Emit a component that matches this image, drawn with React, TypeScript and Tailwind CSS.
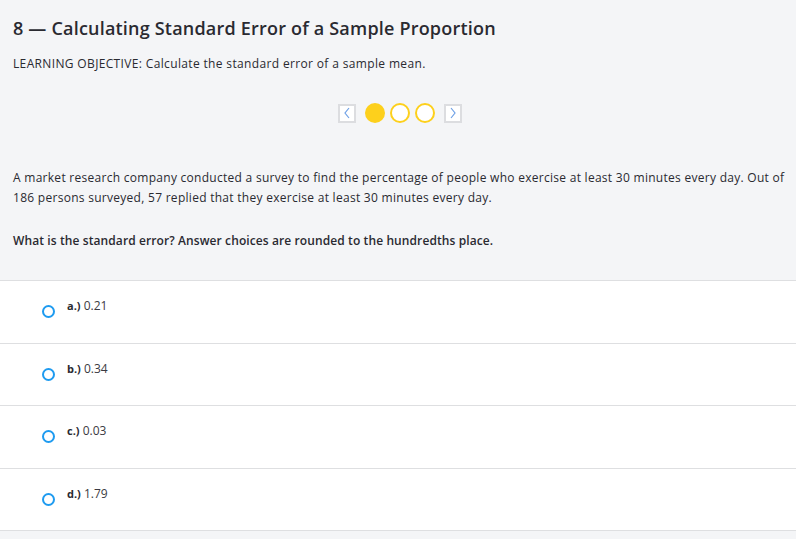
import React from 'react';

const options = [
  { letter: 'a.)', value: '0.21' },
  { letter: 'b.)', value: '0.34' },
  { letter: 'c.)', value: '0.03' },
  { letter: 'd.)', value: '1.79' },
];

function Pager() {
  return (
    <div className="flex items-center justify-center gap-[5px] pt-[31px] pr-[4px]">
      <div className="w-[18px] h-[19px] border-2 border-[#dcdde0] bg-white flex items-center justify-center">
        <svg width="8" height="12" viewBox="0 0 8 12" fill="none">
          <path d="M6 1L2 6l4 5" stroke="#6ea0e6" strokeWidth="1.2" />
        </svg>
      </div>
      <div className="ml-[4px] w-[20px] h-[20px] rounded-full bg-[#fdd01c]" />
      <div className="w-[20px] h-[20px] rounded-full border-2 border-[#fdd01c] bg-white" />
      <div className="w-[20px] h-[20px] rounded-full border-2 border-[#fdd01c] bg-white" />
      <div className="ml-[4px] w-[18px] h-[19px] border-2 border-[#dcdde0] bg-white flex items-center justify-center">
        <svg width="8" height="12" viewBox="0 0 8 12" fill="none">
          <path d="M2 1l4 5-4 5" stroke="#6ea0e6" strokeWidth="1.2" />
        </svg>
      </div>
    </div>
  );
}

export default function App() {
  return (
    <div className="w-[796px] h-[539px] bg-[#f4f5f7] text-[#2a2a31] overflow-hidden" style={{ fontFamily: '"Open Sans", Lato, sans-serif' }}>
      <div className="pl-[13px] pr-[6px] pt-[15px]">
        <h1 className="text-[18px] font-semibold leading-[26px] tracking-[0.2px]">8 — Calculating Standard Error of a Sample Proportion</h1>
        <p className="mt-[15px] text-[12px] leading-[16px] tracking-[0.35px]">
          LEARNING OBJECTIVE: Calculate the standard error of a sample mean.
        </p>
        <Pager />
        <p className="mt-[45px] text-[12px] leading-[20px] tracking-[0.28px]">
          A market research company conducted a survey to find the percentage of people who exercise at least 30 minutes every day. Out of 186 persons surveyed, 57 replied that they exercise at least 30 minutes every day.
        </p>
        <p className="mt-[23px] text-[12px] leading-[20px] font-semibold tracking-[0.1px]">
          What is the standard error? Answer choices are rounded to the hundredths place.
        </p>
      </div>
      <div className="mt-[29px] border-t border-[#dedfe1]">
        {options.map((o) => (
          <div key={o.letter} className="h-[62.5px] bg-white border-b border-[#dedfe1] flex items-start pl-[42px] pt-[17px]">
            <div className="mt-[7px] w-[13px] h-[13px] rounded-full border-2 border-[#1e9bf0]" />
            <div className="ml-[12px] text-[12px] leading-[16px]">
              <span className="font-bold text-[11px]">{o.letter}</span> <span className="text-[#3a3a42]">{o.value}</span>
            </div>
          </div>
        ))}
      </div>
    </div>
  );
}
